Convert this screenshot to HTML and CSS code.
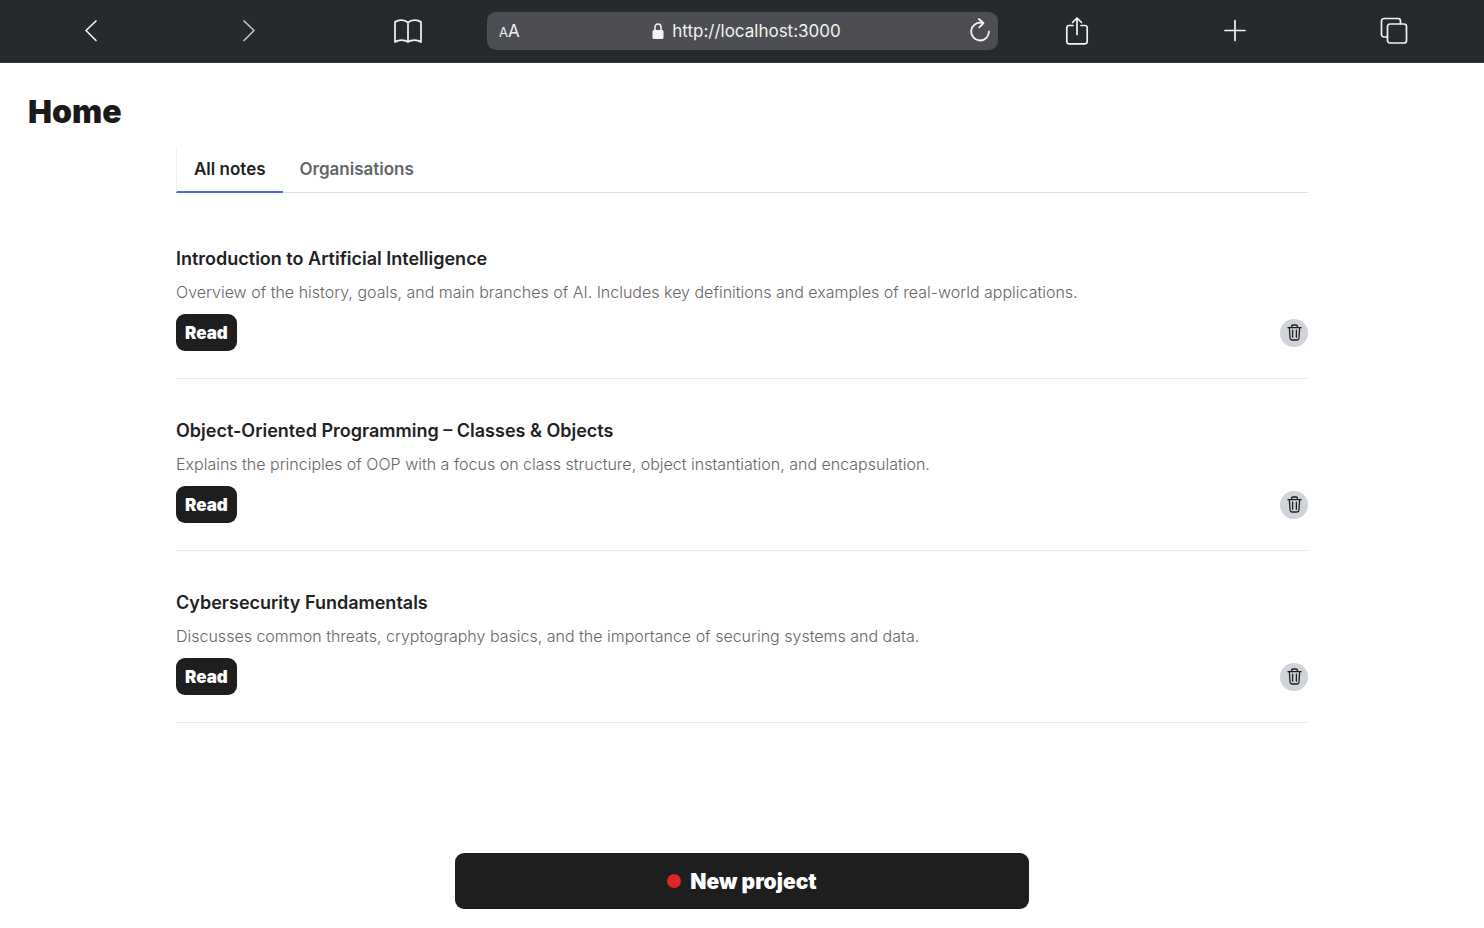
FILE: index.html
```html
<!DOCTYPE html>
<html lang="en">
<head>
<meta charset="utf-8">
<meta name="viewport" content="width=device-width, initial-scale=1">
<title>Home</title>
<link rel="stylesheet" href="styles.css">
</head>
<body>
<svg class="sprite" aria-hidden="true">
  <symbol id="trash" viewBox="0 0 16 18">
    <path d="M1 3.8h14M5 3.6V2.2C5 1.5 5.5 1 6.2 1h3.6c.7 0 1.2.5 1.2 1.2v1.4M2.5 4l.8 11.2c.1 1.1.8 1.8 1.9 1.8h5.6c1.1 0 1.8-.7 1.9-1.8L13.500 4M6 6.500v7.500M10 6.500v7.500"/>
  </symbol>
</svg>
<header class="browser">
  <button class="tool" aria-label="Back"><svg width="28" height="30" viewBox="0 0 28 30"><path d="M19 5 9 14.500l10 10"/></svg></button>
  <button class="tool muted" aria-label="Forward"><svg width="28" height="30" viewBox="0 0 28 30"><path d="M9 5 19 14.500 9 24.500"/></svg></button>
  <button class="tool" aria-label="Bookmarks"><svg width="30" height="30" viewBox="0 0 30 30"><path d="M15 6.500C11.500 3.300 5.300 3.300 2 6v20c3.500-2.600 9.500-2.600 13 0 3.500-2.600 9.500-2.600 13 0V6c-3.300-2.700-9.500-2.700-13 .5zV26"/></svg></button>
  <div class="address">
    <button class="text-size" aria-label="Text size"><span class="small-a">A</span>A</button>
    <span class="url"><svg width="12" height="16" viewBox="0 0 12 16"><path class="shackle" d="M3 8V4.500C3 2.400 4.200 1 6 1s3 1.400 3 3.500V8"/><rect x="0.500" y="7" width="11" height="9" rx="1.500"/></svg>http://localhost:3000</span>
    <button class="reload" aria-label="Reload"><svg width="22" height="26" viewBox="0 0 22 26"><path d="M12.500 4.800A8.900 8.900 0 1 0 20 13.500M9.800 1l4.700 4-4.200 4.300"/></svg></button>
  </div>
  <button class="tool" aria-label="Share"><svg width="28" height="30" viewBox="0 0 28 30"><path d="M10 9.500H6A2.200 2.200 0 0 0 3.800 11.700V25.600A2.200 2.200 0 0 0 6 27.800h16a2.200 2.200 0 0 0 2.200-2.200V11.700A2.200 2.200 0 0 0 22 9.500h-4M14 18.500V2M9.500 6.500 14 2l4.500 4.500"/></svg></button>
  <button class="tool" aria-label="New tab"><svg width="28" height="30" viewBox="0 0 28 30"><path d="M4 14.500h20M14 4.500v20"/></svg></button>
  <button class="tool" aria-label="Tabs"><svg width="28" height="30" viewBox="0 0 28 30"><rect x="7.500" y="8" width="19" height="19" rx="2.500"/><path d="M7 21H4A2.500 2.500 0 0 1 1.500 18.500V5A2.500 2.500 0 0 1 4 2.500h14a2.500 2.500 0 0 1 2.500 2.500V7.500"/></svg></button>
</header>
<main class="page">
  <h1 class="page-title">Home</h1>
  <div class="content">
    <nav class="tabs" aria-label="Notes">
      <button class="tab active">All notes</button>
      <button class="tab">Organisations</button>
    </nav>
    <section class="notes">
      <article class="note">
        <h2 class="note-title">Introduction to Artificial Intelligence</h2>
        <p class="note-text">Overview of the history, goals, and main branches of AI. Includes key definitions and examples of real-world applications.</p>
        <div class="note-actions">
          <button class="read">Read</button>
          <button class="delete" aria-label="Delete"><svg width="15" height="17"><use href="#trash"/></svg></button>
        </div>
      </article>
      <article class="note">
        <h2 class="note-title">Object-Oriented Programming – Classes &amp; Objects</h2>
        <p class="note-text">Explains the principles of OOP with a focus on class structure, object instantiation, and encapsulation.</p>
        <div class="note-actions">
          <button class="read">Read</button>
          <button class="delete" aria-label="Delete"><svg width="15" height="17"><use href="#trash"/></svg></button>
        </div>
      </article>
      <article class="note">
        <h2 class="note-title">Cybersecurity Fundamentals</h2>
        <p class="note-text">Discusses common threats, cryptography basics, and the importance of securing systems and data.</p>
        <div class="note-actions">
          <button class="read">Read</button>
          <button class="delete" aria-label="Delete"><svg width="15" height="17"><use href="#trash"/></svg></button>
        </div>
      </article>
    </section>
  </div>
  <button class="new-project"><span class="dot"></span>New project</button>
</main>
</body>
</html>
```
FILE: styles.css
```css
* { box-sizing: border-box; }

body {
  margin: 0;
  min-height: 100vh;
  display: flex;
  flex-direction: column;
  background: #fff;
  color: #1e1e1e;
  font-family: Inter, "Liberation Sans", sans-serif;
}

button {
  margin: 0;
  padding: 0;
  border: 0;
  background: none;
  color: inherit;
  font: inherit;
  cursor: pointer;
}

svg {
  display: block;
  fill: none;
  stroke: currentColor;
  stroke-linecap: round;
  stroke-linejoin: round;
}

.sprite {
  display: none;
}

.browser {
  display: grid;
  grid-template-columns: repeat(3, 1fr) minmax(300px, 511px) repeat(3, 1fr);
  align-items: center;
  padding: 12px 11px 12px 12px;
  border-bottom: 1px solid #37393d;
  background: #252a2e;
  color: #f2f2f2;
}

.tool {
  display: flex;
  justify-content: center;
}

.tool svg {
  stroke-width: 1.7;
}

.muted {
  color: #c4c4c5;
}

.address {
  display: grid;
  grid-template-columns: 36px 1fr 36px;
  align-items: center;
  height: 38px;
  border-radius: 9px;
  background: #4c4e53;
}

.text-size {
  padding-left: 12px;
  text-align: left;
  font-size: 17px;
  white-space: nowrap;
}

.small-a {
  font-size: 13px;
}

.url {
  display: flex;
  justify-content: center;
  align-items: center;
  gap: 8px;
  padding-left: 8px;
  font-size: 17px;
}

.url svg {
  fill: currentColor;
  stroke: none;
}

.url .shackle {
  fill: none;
  stroke: currentColor;
  stroke-width: 1.6;
}

.reload svg {
  margin-left: 7px;
  stroke-width: 1.8;
}

.page {
  flex: 1;
  display: flex;
  flex-direction: column;
  padding: 30px 28px 19px;
}

.page-title {
  margin: 0;
  font-size: 32px;
  line-height: 38px;
  font-weight: 900;
  color: #1a1a1a;
}

.content {
  padding: 0 148px;
  margin-top: 16px;
}

.tabs {
  display: flex;
  border-bottom: 1px solid #dedfe4;
}

.tab {
  height: 46px;
  margin-bottom: -1px;
  padding: 0 17px;
  border-bottom: 2px solid transparent;
  font-size: 17px;
  font-weight: 600;
  color: #62656b;
}

.tab.active {
  border-left: 1px solid #f1f1f3;
  border-bottom-color: #4969dc;
  color: #1c1f26;
}

.notes {
  padding-top: 14px;
}

.note {
  padding: 40px 0 27px;
  border-bottom: 1px solid #e8e8ea;
}

.note-title {
  margin: 0 0 10px;
  font-size: 18px;
  line-height: 24px;
  font-weight: 600;
  color: #1f2225;
}

.note-text {
  margin: 0 0 11px;
  font-size: 16px;
  line-height: 22px;
  font-weight: 300;
  color: #666;
}

.note-actions {
  display: flex;
  justify-content: space-between;
  align-items: center;
}

.read {
  height: 37px;
  padding: 0 9px;
  border-radius: 9px;
  background: #1e1e1e;
  color: #fff;
  font-size: 17px;
  font-weight: 900;
}

.delete {
  display: grid;
  place-items: center;
  width: 28px;
  height: 28px;
  border-radius: 50%;
  background: #d0d3da;
}

.delete svg {
  stroke-width: 1.4;
}

.new-project {
  display: flex;
  justify-content: center;
  align-items: center;
  gap: 9px;
  width: 100%;
  max-width: 574px;
  height: 56px;
  margin: auto auto 0;
  border-radius: 9px;
  background: #1e1e1e;
  color: #fff;
  font-size: 21px;
  font-weight: 900;
}

.dot {
  width: 14px;
  height: 14px;
  border-radius: 50%;
  background: #dd2626;
}
```
